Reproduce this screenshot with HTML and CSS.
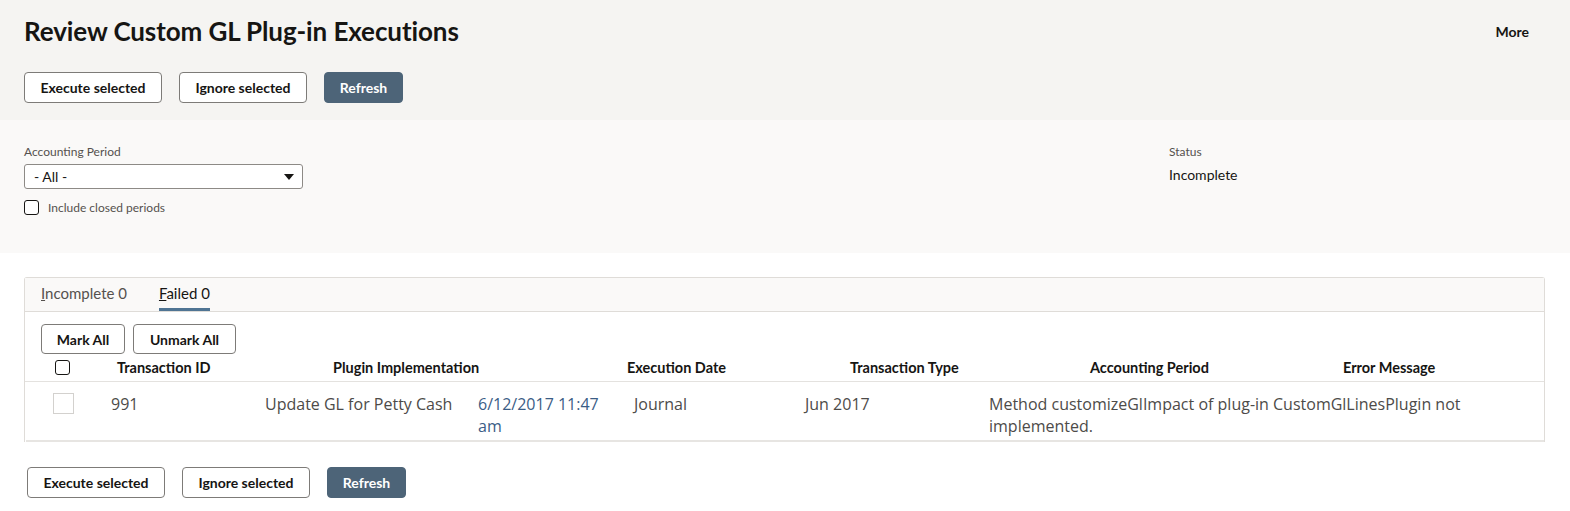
FILE: index.html
```html
<!DOCTYPE html>
<html>
<head>
<meta charset="utf-8">
<link rel="stylesheet" href="styles.css">
</head>
<body>
<header class="page-head">
  <div class="title-row">
    <h1 class="title">Review Custom GL Plug-in Executions</h1>
    <span class="more">More</span>
  </div>
  <div class="btn-row">
    <button class="btn">Execute selected</button>
    <button class="btn">Ignore selected</button>
    <button class="btn btn-primary">Refresh</button>
  </div>
</header>
<section class="filters">
  <div class="field">
    <label class="lbl">Accounting Period</label>
    <div class="select"><span>- All -</span><span class="caret"></span></div>
    <div class="check-line"><span class="chk"></span><span class="chk-lbl">Include closed periods</span></div>
  </div>
  <div class="status">
    <div class="lbl">Status</div>
    <div class="status-val">Incomplete</div>
  </div>
</section>
<section class="panel">
  <div class="tabs">
    <span class="tab"><u>I</u>ncomplete 0</span>
    <span class="tab active"><u>F</u>ailed 0</span>
  </div>
  <div class="panel-body">
    <div class="mark-row">
      <button class="btn btn-sm">Mark All</button>
      <button class="btn btn-sm">Unmark All</button>
    </div>
    <div class="thead">
      <span class="chk"></span>
      <span>Transaction ID</span>
      <span>Plugin Implementation</span>
      <span>Execution Date</span>
      <span>Transaction Type</span>
      <span>Accounting Period</span>
      <span>Error Message</span>
    </div>
  </div>
  <div class="trow">
    <span class="row-chk"></span>
    <span class="cell">991</span>
    <span class="cell">Update GL for Petty Cash</span>
    <span class="cell link">6/12/2017 11:47 am</span>
    <span class="cell">Journal</span>
    <span class="cell">Jun 2017</span>
    <span class="cell">Method customizeGlImpact of plug-in CustomGlLinesPlugin not implemented.</span>
  </div>
</section>
<div class="btn-row bottom">
  <button class="btn">Execute selected</button>
  <button class="btn">Ignore selected</button>
  <button class="btn btn-primary">Refresh</button>
</div>
</body>
</html>
```
FILE: styles.css
```css
* { box-sizing: border-box; }
body {
  margin: 0;
  font-family: Lato, "Liberation Sans", sans-serif;
  color: #161513;
  background: #fff;
}
.page-head {
  background: #f5f4f2;
  padding: 17px 24px 17px 24px;
  height: 120px;
}
.title-row {
  display: flex;
  align-items: center;
  justify-content: space-between;
  height: 28px;
}
.title {
  margin: 0;
  font-size: 26px;
  font-weight: 700;
  letter-spacing: -0.1px;
}
.more {
  font-size: 14px;
  font-weight: 700;
  margin-right: 17px;
}
.btn-row {
  display: flex;
  gap: 17px;
  margin-top: 27px;
}
.btn {
  height: 31px;
  padding: 0 14px;
  border: 1px solid #7d7b78;
  border-radius: 4px;
  background: #fff;
  font-family: Lato, "Liberation Sans", sans-serif;
  font-size: 14px;
  font-weight: 700;
  color: #161513;
}
.btn-row .btn:nth-child(1) { width: 138px; }
.btn-row .btn:nth-child(2) { width: 128px; }
.btn-row .btn:nth-child(3) { width: 79px; }
.btn-primary {
  background: #4d6478;
  border-color: #4d6478;
  color: #fff;
}
.filters {
  background: #faf9f8;
  height: 133px;
  padding: 25px 24px 0 24px;
  display: flex;
}
.field { width: 1145px; }
.lbl {
  display: block;
  font-size: 12px;
  color: #55514e;
  height: 14px;
  line-height: 14px;
}
.select {
  margin-top: 5px;
  width: 279px;
  height: 25px;
  background: #fff;
  border: 1px solid #8d8a86;
  border-radius: 3px;
  display: flex;
  align-items: center;
  justify-content: space-between;
  padding: 0 8px 0 9px;
  font-size: 14px;
}
.caret {
  width: 0;
  height: 0;
  border-left: 5px solid transparent;
  border-right: 5px solid transparent;
  border-top: 6px solid #161513;
}
.check-line {
  display: flex;
  align-items: center;
  gap: 9px;
  margin-top: 11px;
}
.chk {
  display: inline-block;
  width: 15px;
  height: 15px;
  border: 1.5px solid #161513;
  border-radius: 3px;
  background: #fff;
}
.chk-lbl { font-size: 12px; color: #55514e; }
.status-val {
  margin-top: 7px;
  font-size: 14px;
  color: #161513;
}
.panel {
  margin: 24px 25px 0 24px;
  border: 1px solid #dfdcd8;
  border-radius: 3px 3px 0 0;
  border-bottom: none;
}
.tabs {
  background: #faf9f8;
  height: 34px;
  border-bottom: 1px solid #dfdcd8;
  display: flex;
  gap: 32px;
  padding-left: 16px;
}
.tab {
  font-size: 15px;
  color: #55514e;
  line-height: 31px;
  padding-top: 0;
}
.tab.active {
  color: #161513;
  border-bottom: 3px solid #4f7493;
}
.panel-body {
  background: #fff;
  padding: 12px 0 0 0;
}
.mark-row {
  display: flex;
  gap: 8px;
  padding-left: 16px;
}
.btn-sm { height: 30px; padding: 0 14px; }
.mark-row .btn:nth-child(1) { width: 84px; }
.mark-row .btn:nth-child(2) { width: 103px; }
.thead {
  display: grid;
  grid-template-columns: 62px 216px 294px 223px 240px 253px 1fr;
  align-items: center;
  padding-left: 30px;
  height: 28px;
  font-size: 14.5px;
  font-weight: 700;
  border-bottom: 1px solid #e4e2df;
  color: #161513;
}
.trow {
  display: grid;
  grid-template-columns: 58px 154px 213px 156px 171px 184px 520px;
  align-items: start;
  padding: 11px 0 0 27px;
  margin: 0 0 0 1px;
  height: 60px;
  border-bottom: 2px solid #e7e5e2;
  font-family: "Open Sans", "Noto Sans", sans-serif;
  font-size: 16px;
  color: #4d4b49;
}
.row-chk {
  width: 21px;
  height: 21px;
  border: 1px solid #d3d1ce;
  background: #fff;
}
.cell { line-height: 22px; padding-right: 12px; }
.cell.link { color: #3b5d86; }
.btn-row.bottom {
  margin: 25px 0 0 27px;
}
```
